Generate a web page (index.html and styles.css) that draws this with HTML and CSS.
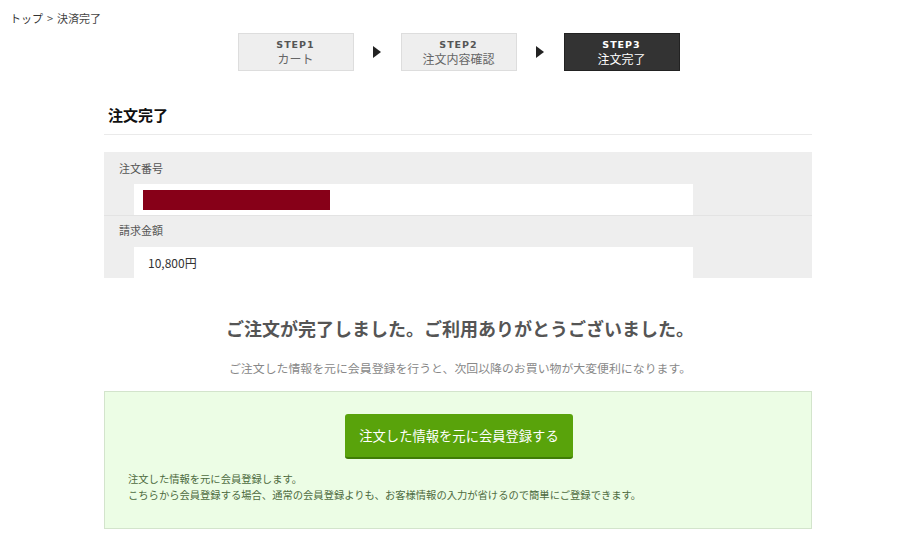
FILE: index.html
```html
<!DOCTYPE html>
<html lang="ja">
<head>
<meta charset="utf-8">
<title>決済完了</title>
<link rel="stylesheet" href="styles.css">
</head>
<body>
<div class="breadcrumb"><a class="crumb-link">トップ</a><span class="crumb-sep">&gt;</span><span class="crumb-current">決済完了</span></div>
<main class="main">
  <ol class="steps">
    <li class="step"><span class="step-num">STEP1</span><span class="step-name">カート</span></li>
    <li class="step-arrow"><span class="tri"></span></li>
    <li class="step"><span class="step-num">STEP2</span><span class="step-name">注文内容確認</span></li>
    <li class="step-arrow"><span class="tri"></span></li>
    <li class="step step-active"><span class="step-num">STEP3</span><span class="step-name">注文完了</span></li>
  </ol>

  <h1 class="page-title">注文完了</h1>

  <div class="summary">
    <div class="summary-row">
      <div class="summary-label">注文番号</div>
      <div class="summary-field field-order"><span class="order-mask"></span></div>
    </div>
    <div class="summary-row summary-row-second">
      <div class="summary-label">請求金額</div>
      <div class="summary-field field-amount">10,800円</div>
    </div>
  </div>

  <p class="thanks">ご注文が完了しました。ご利用ありがとうございました。</p>
  <p class="thanks-sub">ご注文した情報を元に会員登録を行うと、次回以降のお買い物が大変便利になります。</p>

  <section class="register">
    <div class="register-btn-wrap"><a class="register-btn">注文した情報を元に会員登録する</a></div>
    <p class="register-note">注文した情報を元に会員登録します。<br>こちらから会員登録する場合、通常の会員登録よりも、お客様情報の入力が省けるので簡単にご登録できます。</p>
  </section>
</main>
</body>
</html>
```

FILE: styles.css
```css
* { box-sizing: border-box; }
html, body { margin: 0; padding: 0; background: #fff; }
body {
  font-family: "Noto Sans CJK JP", "Noto Sans", "Liberation Sans", sans-serif;
  color: #333;
  width: 900px;
  height: 542px;
  overflow: hidden;
}

.breadcrumb {
  padding: 10px 10px 0;
  height: 28px;
  font-size: 11px;
  line-height: 16px;
  color: #333;
}
.crumb-sep { margin: 0 4px; color: #555; }
.crumb-current { color: #444; }

.main {
  margin-left: 104px;
  width: 708px;
}

.steps {
  list-style: none;
  margin: 5px 0 0;
  padding: 0;
  display: flex;
  justify-content: center;
  padding-left: 1px;
}
.step {
  width: 116px;
  height: 38px;
  background: #eee;
  border: 1px solid #ddd;
  display: flex;
  flex-direction: column;
  align-items: center;
  justify-content: center;
  color: #666;
}
.step-num {
  font-family: "DejaVu Sans", "Noto Sans", sans-serif;
  font-weight: bold;
  font-size: 9.5px;
  letter-spacing: 1px;
  line-height: 13px;
  color: #555;
}
.step-name {
  font-size: 12px;
  line-height: 16px;
  color: #666;
}
.step-active { background: #333; border-color: #222; }
.step-active .step-num,
.step-active .step-name { color: #fff; }

.step-arrow {
  width: 47px;
  display: flex;
  align-items: center;
  justify-content: center;
}
.tri {
  width: 0;
  height: 0;
  border-top: 6px solid transparent;
  border-bottom: 6px solid transparent;
  border-left: 8px solid #222;
}

.page-title {
  margin: 33px 0 0;
  padding: 0 4px 8px;
  font-size: 15px;
  line-height: 22px;
  font-weight: bold;
  color: #111;
  border-bottom: 1px solid #eaeaea;
}

.summary {
  margin-top: 17px;
  background: #eee;
}
.summary-row { height: 63px; }
.summary-row-second { border-top: 1px solid #e3e3e3; }
.summary-label {
  height: 32px;
  padding: 8px 0 0 15px;
  font-size: 11px;
  line-height: 16px;
  color: #555;
}
.summary-row-second .summary-label { height: 31px; padding-top: 6px; }
.summary-field {
  margin-left: 30px;
  width: 559px;
  height: 31px;
  background: #fff;
}
.field-order { padding: 6px 0 0 9px; }
.order-mask {
  display: block;
  width: 187px;
  height: 20px;
  background: #870018;
}
.field-amount {
  padding-left: 14px;
  font-size: 12px;
  line-height: 31px;
  color: #333;
}

.thanks {
  margin: 38px 0 0;
  text-align: center;
  font-size: 18px;
  line-height: 24px;
  font-weight: bold;
  color: #555;
  padding-left: 4px;
}
.thanks-sub {
  margin: 19px 0 0;
  text-align: center;
  font-size: 11.9px;
  line-height: 18px;
  color: #888;
  padding-left: 4px;
}

.register {
  margin-top: 14px;
  background: #ecfde5;
  border: 1px solid #d3e4cc;
  padding: 22px 0 25px 23px;
}
.register-btn-wrap {
  display: flex;
  justify-content: center;
  padding-right: 23px;
  padding-left: 2px;
}
.register-btn {
  display: flex;
  align-items: center;
  justify-content: center;
  width: 228px;
  height: 45px;
  background: #59a30b;
  border-bottom: 2px solid #3f7c05;
  border-radius: 3px;
  color: #fff;
  font-size: 13.3px;
}
.register-note {
  margin: 12px 0 0;
  font-size: 10.3px;
  line-height: 16px;
  color: #4d6b40;
}
```
